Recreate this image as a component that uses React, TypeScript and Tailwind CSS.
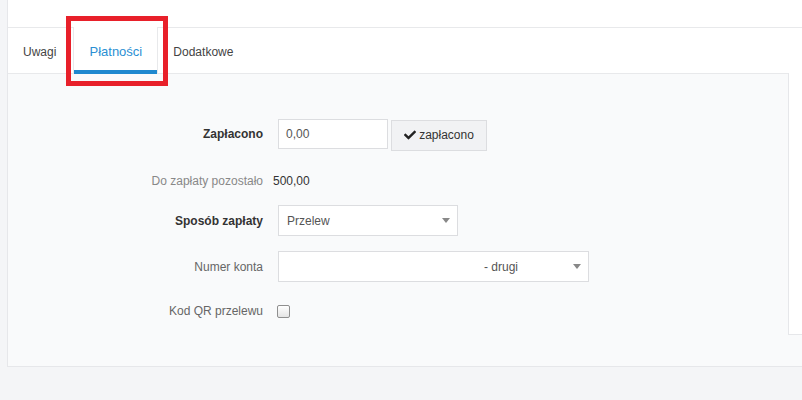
import React from "react";
import { FaCheck } from "react-icons/fa";

function Caret() {
  return (
    <span className="block w-0 h-0 border-l-[4px] border-r-[4px] border-t-[5px] border-l-transparent border-r-transparent border-t-[#888]" />
  );
}

export default function App() {
  return (
    <div className="relative w-[802px] h-[400px] bg-[#f4f5f7] font-['Liberation_Sans',Arial,sans-serif] text-[12px] text-[#333] overflow-hidden">
      <div className="ml-[7px] border-l border-b border-[#e6e7ea] bg-white">
        <div className="h-[28px] border-b border-[#e8e9eb]" />
        <div className="flex h-[46px] border-b border-[#e8e9eb]">
          <div className="px-[15px] pt-[15px] text-[#444]">Uwagi</div>
          <div className="relative ml-[2px] -mt-px w-[85px] border-l border-r border-[#e8e9eb] bg-white pt-[15px] text-center text-[13px] text-[#2b8fd3]">
            Płatności
            <div className="absolute left-0 right-0 bottom-[-1px] h-[4px] bg-[#1e88cf]" />
          </div>
          <div className="px-[15px] pt-[15px] text-[#444]">Dodatkowe</div>
        </div>
        <div className="flex h-[292px] bg-[#f9fafb]">
          <div className="flex-1 pt-[45px]">
            <div className="flex items-center h-[30px]">
              <div className="w-[255px] text-right font-bold text-[#333]">Zapłacono</div>
              <div className="ml-[15px] w-[110px] h-[30px] border border-[#dcdde0] bg-white pl-[7px] flex items-center text-[#555]">0,00</div>
              <div className="ml-[3px] mt-[2px] w-[96px] h-[31px] border border-[#dcdde0] bg-[#f1f2f4] flex items-center justify-center gap-[3px] text-[#333]">
                <FaCheck className="w-[12px] h-[12px] text-[#222]" />
                <span>zapłacono</span>
              </div>
            </div>
            <div className="flex items-center h-[30px] mt-[17px]">
              <div className="w-[255px] text-right text-[#888]">Do zapłaty pozostało</div>
              <div className="ml-[10px] text-[#333]">500,00</div>
            </div>
            <div className="flex items-center h-[31px] mt-[9px]">
              <div className="w-[255px] text-right font-bold text-[#333]">Sposób zapłaty</div>
              <div className="ml-[15px] w-[180px] h-[31px] border border-[#dcdde0] bg-white pl-[8px] pr-[7px] flex items-center justify-between text-[#555]">
                <span>Przelew</span>
                <Caret />
              </div>
            </div>
            <div className="flex items-center h-[31px] mt-[15px]">
              <div className="w-[255px] text-right text-[#666]">Numer konta</div>
              <div className="ml-[15px] w-[311px] h-[31px] border border-[#dcdde0] bg-white pl-[205px] pr-[7px] flex items-center justify-between text-[#555]">
                <span>- drugi</span>
                <Caret />
              </div>
            </div>
            <div className="flex items-center h-[30px] mt-[14px]">
              <div className="w-[255px] text-right text-[#666]">Kod QR przelewu</div>
              <div className="ml-[14px] w-[13px] h-[13px] rounded-[2px] border border-[#8f8f8f] bg-gradient-to-b from-white to-[#e4e4e4]" />
            </div>
          </div>
          <div className="w-[14px] h-[262px] bg-white border-l border-b border-[#e6e7ea] -mt-px" />
        </div>
      </div>
      <div className="absolute left-[66px] top-[16px] w-[102px] h-[70px] border-[5px] border-[#e8202a]" />
    </div>
  );
}
